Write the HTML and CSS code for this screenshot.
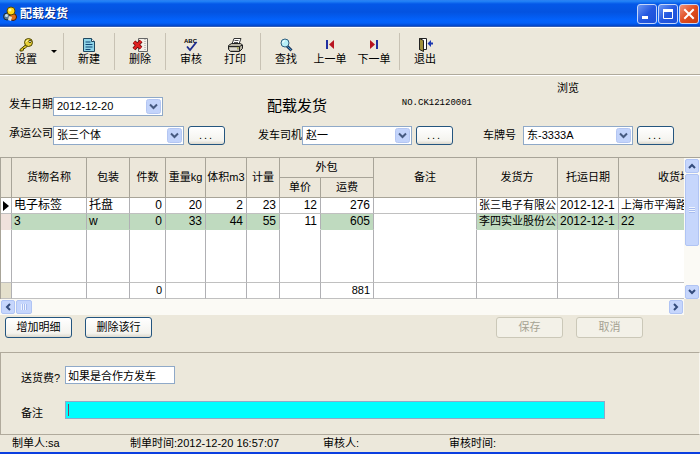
FILE: index.html
```html
<!DOCTYPE html>
<html lang="zh-CN">
<head>
  <meta charset="UTF-8" />
  <meta name="viewport" content="width=device-width, initial-scale=1.0" />
  <title>配载发货</title>
  <link rel="stylesheet" href="styles.css">
</head>
<body>
  <header class="titlebar">
    <svg class="app-icon" width="14" height="16" viewBox="0 0 14 16">
      <circle cx="4" cy="10.500" r="3.500" fill="#5a7890" stroke="#182838"/>
      <circle cx="3.500" cy="9.500" r="1.500" fill="#c8e0f0"/>
      <circle cx="10" cy="11" r="3.500" fill="#e07018" stroke="#401808"/>
      <circle cx="8" cy="5" r="4" fill="#ffd818" stroke="#5a4800"/>
      <circle cx="7" cy="4" r="1.500" fill="#fff8a0"/>
      <path d="M6 10l3 1-1 4-3-1z" fill="#e8e0d0"/>
    </svg>
    <h1>配载发货</h1>
    <div class="window-buttons">
      <button aria-label="最小化"><svg width="18" height="18" viewBox="0 0 18 18"><path d="M4 11h6v3H4z" fill="#fff"/></svg></button>
      <button aria-label="最大化"><svg width="18" height="18" viewBox="0 0 18 18"><path d="M4.500 4.500h9v9h-9z" fill="none" stroke="#fff"/><path d="M4 4h10v3H4z" fill="#fff"/></svg></button>
      <button class="close" aria-label="关闭"><svg width="18" height="18" viewBox="0 0 18 18"><path d="M5 5l8 8M13 5l-8 8" stroke="#fff" stroke-width="2" stroke-linecap="square"/></svg></button>
    </div>
  </header>

  <nav class="toolbar">
    <button class="tool">
      <svg width="16" height="14" viewBox="0 0 16 14">
        <path d="M8 6.500L2 11.500v1.500h2.500l1-1v-1.500H7l2.500-2.500" fill="#d8c020" stroke="#4a4200"/>
        <circle cx="10.500" cy="4.500" r="4" fill="#e8d038" stroke="#4a4200"/>
        <path d="M8 4a3 3 0 0 1 2-2" fill="none" stroke="#fffbb0"/>
        <circle cx="12" cy="3.500" r="1.200" fill="#fff" stroke="#4a4200"/>
      </svg>
      设置
    </button>
    <button class="tool-more" aria-label="更多设置"></button>
    <span class="sep"></span>
    <button class="tool">
      <svg width="16" height="14" viewBox="0 0 16 14">
        <path d="M2.500.500h8l3 3v10h-11z" fill="#8fd4e8" stroke="#204860"/>
        <path d="M10.500.500v3h3" fill="#fff" stroke="#204860"/>
        <path d="M4.500 4h5M4.500 6.500h7M4.500 9h7M4.500 11.500h5" stroke="#104878"/>
      </svg>
      新建
    </button>
    <span class="sep"></span>
    <button class="tool">
      <svg width="16" height="14" viewBox="0 0 16 14">
        <path d="M6.500.500h9v13h-9z" fill="#f4f0e8" stroke="#666"/>
        <path d="M13 1v12" stroke="#999" stroke-dasharray="1 1"/>
        <path d="M2 4l7 6M9 3L2 11" stroke="#601010" stroke-width="4"/>
        <path d="M2 4l7 6M9 3L2 11" stroke="#e02020" stroke-width="2.500"/>
      </svg>
      删除
    </button>
    <span class="sep"></span>
    <button class="tool">
      <svg width="16" height="14" viewBox="0 0 16 14">
        <text class="abc" x="1" y="5">ABC</text>
        <path d="M4 8.500l3 3.500 6.500-8" fill="none" stroke="#1c2c90" stroke-width="1.800"/>
      </svg>
      审核
    </button>
    <button class="tool">
      <svg width="16" height="14" viewBox="0 0 16 14">
        <path d="M5 6l2-5.500h7L12 6z" fill="#fff" stroke="#333"/>
        <path d="M7.500 2.500h4M7 4.500h4" stroke="#555"/>
        <path d="M1.500 7.500l3-2h9l2 1.500v3.500l-3 3h-9l-2-2z" fill="#b8b4a4" stroke="#222"/>
        <path d="M1.500 8.500h11l3-1.500M12.500 8.500V13" fill="none" stroke="#222"/>
        <path d="M3 11h7" stroke="#fff"/><path d="M10 10h1.500" stroke="#a0a000"/>
      </svg>
      打印
    </button>
    <span class="sep"></span>
    <button class="tool">
      <svg width="16" height="14" viewBox="0 0 16 14">
        <path d="M9 8l4.500 4.500" stroke="#203860" stroke-width="3"/>
        <path d="M9.500 8.500l3.500 3.500" stroke="#3898c8"/>
        <circle cx="7" cy="5" r="4" fill="#b8f0f8" stroke="#306080"/>
        <path d="M4.800 5A2 2 0 0 1 7 2.800" fill="none" stroke="#fff"/>
      </svg>
      查找
    </button>
    <button class="tool">
      <svg width="16" height="14" viewBox="0 0 16 14"><path d="M4 2h2v9H4z" fill="#2030a0"/><path d="M12 2v9L7 6.500z" fill="#b81420"/></svg>
      上一单
    </button>
    <button class="tool">
      <svg width="16" height="14" viewBox="0 0 16 14"><path d="M4 2v9l5-4.500z" fill="#b81420"/><path d="M10 2h2v9h-2z" fill="#2030a0"/></svg>
      下一单
    </button>
    <span class="sep"></span>
    <button class="tool">
      <svg width="16" height="14" viewBox="0 0 16 14">
        <path d="M2.500.500h7v11h-7z" fill="#fff" stroke="#222"/>
        <path d="M2.500.500l4 2v11l-4-2z" fill="#a09038" stroke="#222"/>
        <path d="M16 4.500h-2V2l-3.500 3.500L14 9V6.500h2z" fill="#1c38b0"/>
      </svg>
      退出
    </button>
  </nav>

  <main>
    <form class="order">
      <div class="mode">浏览</div>
      <div class="field field-top">
        <label for="date">发车日期</label>
        <select id="date"><option>2012-12-20</option></select>
      </div>
      <div class="order-title">
        <h2>配载发货</h2>
        <span class="order-no">NO.CK12120001</span>
      </div>
      <div class="field field-top field-company">
        <label for="company">承运公司</label>
        <select id="company" class="wide"><option>张三个体</option></select>
        <button type="button" class="btn browse" aria-label="选择承运公司">...</button>
      </div>
      <div class="field field-driver">
        <label for="driver">发车司机</label>
        <select id="driver"><option>赵一</option></select>
        <button type="button" class="btn browse" aria-label="选择司机">...</button>
      </div>
      <div class="field field-plate">
        <label for="plate">车牌号</label>
        <select id="plate"><option>东-3333A</option></select>
        <button type="button" class="btn browse" aria-label="选择车牌">...</button>
      </div>
    </form>

    <section class="grid">
      <div class="grid-view">
        <table>
          <colgroup>
            <col class="c-mark"><col class="c-name"><col class="c-pack"><col class="c-count"><col class="c-weight"><col class="c-volume"><col class="c-calc"><col class="c-price"><col class="c-freight"><col class="c-note"><col class="c-sender"><col class="c-date"><col class="c-address">
          </colgroup>
          <thead>
            <tr>
              <th rowspan="2"></th>
              <th rowspan="2">货物名称</th>
              <th rowspan="2">包装</th>
              <th rowspan="2">件数</th>
              <th rowspan="2">重量kg</th>
              <th rowspan="2">体积m3</th>
              <th rowspan="2">计量</th>
              <th colspan="2">外包</th>
              <th rowspan="2">备注</th>
              <th rowspan="2">发货方</th>
              <th rowspan="2">托运日期</th>
              <th rowspan="2">收货地址</th>
            </tr>
            <tr>
              <th>单价</th>
              <th>运费</th>
            </tr>
          </thead>
          <tbody>
            <tr>
              <td class="mark"><svg width="6" height="10" viewBox="0 0 6 10"><path d="M0 0v10l6-5z"/></svg></td>
              <td>电子标签</td><td>托盘</td>
              <td class="num">0</td><td class="num">20</td><td class="num">2</td><td class="num">23</td><td class="num">12</td><td class="num">276</td>
              <td></td><td class="text">张三电子有限公</td><td>2012-12-1</td><td class="text">上海市平海路</td>
            </tr>
            <tr class="marked">
              <td class="mark"></td>
              <td>3</td><td>w</td>
              <td class="num">0</td><td class="num">33</td><td class="num">44</td><td class="num">55</td><td class="num plain">11</td><td class="num">605</td>
              <td class="plain"></td><td class="text">李四实业股份公</td><td>2012-12-1</td><td>22</td>
            </tr>
            <tr class="blank">
              <td></td><td></td><td></td><td></td><td></td><td></td><td></td><td></td><td></td><td></td><td></td><td></td><td></td>
            </tr>
          </tbody>
          <tfoot>
            <tr>
              <td class="corner"></td><td></td><td></td><td class="num">0</td><td></td><td></td><td></td><td></td><td class="num">881</td><td></td><td></td><td></td><td></td>
            </tr>
          </tfoot>
        </table>
      </div>
      <div class="scroll scroll-v">
        <button aria-label="向上"><svg width="8" height="8" viewBox="0 0 8 8"><path d="M1 6l3-3 3 3"/></svg></button>
        <span class="thumb"></span>
        <span class="track"></span>
        <button aria-label="向下"><svg width="8" height="8" viewBox="0 0 8 8"><path d="M1 2l3 3 3-3"/></svg></button>
      </div>
      <div class="scroll scroll-h">
        <button aria-label="向左"><svg width="8" height="8" viewBox="0 0 8 8"><path d="M6 1L3 4l3 3"/></svg></button>
        <span class="thumb"></span>
        <span class="track"></span>
        <button aria-label="向右"><svg width="8" height="8" viewBox="0 0 8 8"><path d="M2 1l3 3-3 3"/></svg></button>
      </div>
    </section>

    <div class="actions">
      <button class="btn">增加明细</button>
      <button class="btn">删除该行</button>
      <div class="actions-end">
        <button class="btn" disabled>保存</button>
        <button class="btn" disabled>取消</button>
      </div>
    </div>

    <section class="extra">
      <div class="line">
        <label for="fee">送货费?</label>
        <input id="fee" type="text" value="如果是合作方发车">
      </div>
      <div class="line">
        <label for="note">备注</label>
        <input id="note" class="note" type="text">
      </div>
    </section>
  </main>

  <footer class="status">
    <span>制单人:sa</span>
    <span>制单时间:2012-12-20 16:57:07</span>
    <span>审核人:</span>
    <span>审核时间:</span>
  </footer>
</body>
</html>
```
FILE: styles.css
```css
* {
  box-sizing: border-box;
}
body {
  margin: 0;
  min-height: 100vh;
  display: flex;
  flex-direction: column;
  background: #ece8db;
  border-bottom: 2px solid #0b3fe0;
  color: #000;
  font: 11px/15px "Liberation Sans", "Noto Sans CJK SC", sans-serif;
}
button, input, select {
  font: inherit;
  color: inherit;
  margin: 0;
}
h1, h2 {
  margin: 0;
}

/* title bar */
.titlebar {
  display: flex;
  align-items: center;
  height: 27px;
  padding: 0 1px 0 3px;
  background: linear-gradient(#2b7df0 0, #2486f8 1px, #0458e8 4px, #0453e0 12px, #0362fc 20px, #0360f8 23px, #0144c8 26px, #6878a0 27px);
  color: #fff;
}
.titlebar h1 {
  margin-left: 3px;
  font-size: 12px;
  line-height: 16px;
  text-shadow: 1px 1px #0a2a80;
}
.window-buttons {
  display: flex;
  gap: 1px;
  margin-left: auto;
}
.window-buttons button {
  display: flex;
  width: 20px;
  height: 20px;
  padding: 0;
  border: 1px solid #c4d6fa;
  border-radius: 3px;
  background: linear-gradient(135deg, #6c98f4, #2458e0 50%, #1c50d8);
}
.window-buttons .close {
  background: linear-gradient(135deg, #f0947c, #e04c20 50%, #c83c10);
}

/* toolbar */
.toolbar {
  display: flex;
  height: 49px;
  padding: 5px 4px;
  border-top: 1px solid #fff;
  border-bottom: 1px solid #fff;
  box-shadow: inset 0 -1px #b0aa9c;
}
.tool {
  display: flex;
  flex-direction: column;
  align-items: center;
  width: 44px;
  padding: 5px 0 0;
  border: 0;
  background: none;
  white-space: nowrap;
}
.tool-more {
  width: 12px;
  padding: 0;
  border: 0;
  background: none;
}
.tool-more::before {
  content: "";
  display: block;
  width: 0;
  margin: 0 auto;
  border: 3px solid transparent;
  border-top-color: #000;
  border-bottom: 0;
}
.sep {
  width: 1px;
  margin: 0 3px;
  background: #c8c2b4;
}
.abc {
  font: bold 6px "Liberation Sans", sans-serif;
}

/* order header */
main {
  flex: 1;
  display: flex;
  flex-direction: column;
}
.order {
  display: grid;
  grid-template-columns: 249px 225px 1fr;
  grid-template-rows: 17px 29px 31px;
  align-items: start;
  padding: 4px 0 0 9px;
}
.mode {
  grid-column: 3;
  padding-left: 74px;
  line-height: 17px;
}
.field {
  display: flex;
  align-items: center;
}
.field-top {
  align-items: flex-start;
}
.field-company, .field-driver, .field-plate {
  grid-row: 3;
}
.field label {
  width: 44px;
}
.field-plate label {
  width: 40px;
}
select {
  appearance: none;
  width: 110px;
  height: 19px;
  padding: 0 18px 0 3px;
  border: 1px solid #8fa9c8;
  border-radius: 0;
  background: #fff url("data:image/svg+xml,%3Csvg xmlns='http://www.w3.org/2000/svg' width='15' height='15'%3E%3Crect x='.5' y='.5' width='14' height='14' rx='2' fill='%23c3d4fb' stroke='%23b4c6f2'/%3E%3Cpath d='M4 5.500l3.500 3.500L11 5.500' fill='none' stroke='%23465a80' stroke-width='2'/%3E%3C/svg%3E") no-repeat right 1px center;
}
select.wide {
  width: 131px;
}
.btn {
  min-width: 67px;
  height: 21px;
  padding: 0 4px;
  border: 1px solid #24557f;
  border-radius: 3px;
  background: linear-gradient(#fff, #f4f3ee 80%, #dcd8cc);
}
.btn:disabled {
  border-color: #cbc8b8;
  background: #f3f1e8;
  color: #a5a292;
}
.browse {
  min-width: 37px;
  height: 19px;
  margin-left: 4px;
  letter-spacing: 2px;
}
.order-title {
  display: flex;
  justify-content: space-between;
  padding: 0 11px 0 9px;
}
.order-title h2 {
  font-size: 15px;
  font-weight: normal;
  line-height: 17px;
}
.order-no {
  font: 9px/12px "Liberation Mono", monospace;
}

/* detail grid */
.grid {
  display: grid;
  grid-template-columns: minmax(0, 1fr) 16px;
  border-top: 1px solid #a8a498;
}
.grid-view {
  overflow: hidden;
  background: #fff;
  border-left: 1px solid #a8a498;
}
table {
  width: 741px;
  table-layout: fixed;
  border-collapse: separate;
  border-spacing: 0;
  font-size: 12px;
}
.c-mark { width: 11px; }
.c-name { width: 75px; }
.c-pack { width: 43px; }
.c-count { width: 36px; }
.c-weight { width: 40px; }
.c-volume { width: 41px; }
.c-calc { width: 33px; }
.c-price { width: 41px; }
.c-freight { width: 53px; }
.c-note { width: 103px; }
.c-sender { width: 81px; }
.c-date { width: 61px; }
th, td {
  padding: 0 2px;
  border-right: 1px solid #b0b0b4;
  border-bottom: 1px solid #c0c0c0;
  overflow: hidden;
  white-space: nowrap;
  text-align: left;
}
th {
  height: 20px;
  padding: 0;
  border-color: #a8a498;
  background: #ece7da;
  font-size: 11px;
  font-weight: normal;
  text-align: center;
}
td {
  height: 16px;
  line-height: 15px;
}
td.num {
  padding-right: 3px;
  text-align: right;
}
td.text {
  font-size: 11px;
}
td.mark {
  padding: 0 0 0 2px;
}
.mark svg {
  display: block;
}
.marked td {
  background: #bfdabf;
  border-bottom-color: transparent;
}
.marked .plain {
  background: #fff;
}
.marked .mark {
  background: #f0e2dc;
}
.blank td {
  height: 53px;
}
tfoot td {
  font-size: 11px;
}
tfoot .corner {
  background: #e4e0cc;
}
.scroll {
  display: flex;
  background: #fbfaf5;
}
.scroll button, .thumb {
  flex: none;
  display: flex;
  align-items: center;
  justify-content: center;
  width: 14px;
  height: 14px;
  padding: 0;
  border: 1px solid #b0c4f4;
  border-radius: 2px;
  background: #c6d6fc;
}
.scroll path {
  fill: none;
  stroke: #344c7c;
  stroke-width: 2;
}
.scroll .track {
  flex: 1;
}
.scroll-v {
  flex-direction: column;
  padding: 1px 1px 0;
}
.scroll-v .thumb {
  height: 72px;
  margin-top: 1px;
}
.scroll-h {
  height: 16px;
  padding: 1px;
}
.scroll-h .thumb {
  width: 16px;
  margin-left: 1px;
}
.thumb::before {
  content: "";
  width: 6px;
  height: 6px;
  background: repeating-linear-gradient(#eef4fe 0 1px, #a8bcf0 1px 2px);
}
.scroll-h .thumb::before {
  background: repeating-linear-gradient(90deg, #eef4fe 0 1px, #a8bcf0 1px 2px);
}

/* actions */
.actions {
  display: flex;
  gap: 13px;
  padding: 2px 57px 14px 5px;
}
.actions-end {
  display: flex;
  gap: 13px;
  margin-left: auto;
}

/* extra fields */
.extra {
  flex: 1;
  display: flex;
  flex-direction: column;
  gap: 17px;
  padding: 13px 94px 0 18px;
  border: 1px solid #b0aa9c;
  border-right-color: #f8f6f0;
}
.line {
  display: flex;
}
.line label {
  width: 46px;
  padding: 6px 0 0 2px;
  line-height: 12px;
}
.line input {
  width: 110px;
  height: 18px;
  padding: 0 2px;
  border: 1px solid #8fa9c8;
  background: #fff;
}
.line .note {
  flex: 1;
  background: linear-gradient(#884060, #884060) 2px 2px / 1px 12px no-repeat #0ff;
}

/* status bar */
.status {
  display: grid;
  grid-template-columns: 118px 193px 126px 1fr;
  height: 17px;
  padding-left: 12px;
  line-height: 17px;
}
```
